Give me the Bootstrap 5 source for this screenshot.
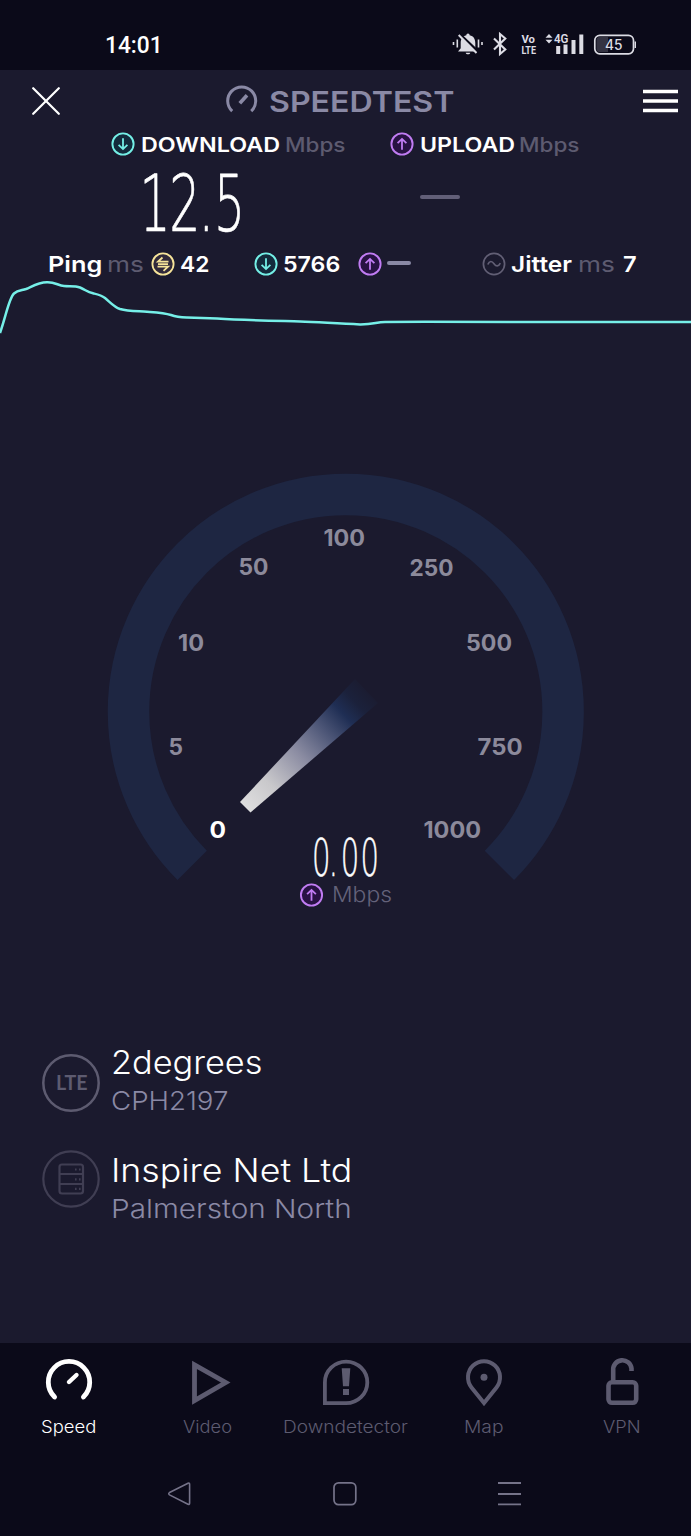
<!DOCTYPE html>
<html lang="en">
<head>
<meta charset="utf-8">
<meta name="viewport" content="width=device-width, initial-scale=1">
<title>Speedtest</title>
<link rel="stylesheet" href="https://cdn.jsdelivr.net/npm/bootstrap@5.3.0/dist/css/bootstrap.min.css">
<style>
  :root { --ink:#1b1a2e; --night:#0b0a19; --muted:#5d5b70; --soft:#8a89a5; }
  body { width:691px; height:1536px; margin:0; background:var(--ink); color:#fff; font-family:Inter,"Open Sans",sans-serif; overflow:hidden; line-height:1; }
  svg { display:block; flex:none; }
  .statusbar { height:70px; background:var(--night); padding:20px 55px 0 105px; }
  .status-icons { margin-top:5px; }
  .clock { font:500 23.5px/50px Roboto,sans-serif; }
  .topbar { height:62px; padding:0 13px 0 32px; }
  .brand { margin-right:26px; }
  .brand-name { font-size:29px; font-weight:600; color:var(--soft); width:184px; }
  .fit { display:inline-block; white-space:nowrap; transform-origin:0 50%; }
  .labels { display:grid; height:24px; align-items:center; padding-left:110.5px; grid-template-columns:30px 144px 105.5px 29.5px 99px 70px; font-size:20.3px; font-weight:600; }
  .labels > div { padding-top:2px; }
  .unit { color:var(--muted); font-weight:500; }
  .readings { display:grid; height:96px; padding-left:131px; grid-template-columns:289px 1fr; }
  .dash-lg { width:40px; height:4px; border-radius:2px; background:#625f78; margin-top:39px; }
  .dash-sm { width:24px; height:4px; border-radius:2px; background:#8a89a5; margin-top:-3px; }
  .stats { display:grid; height:24px; align-items:center; padding-left:47.5px; grid-template-columns:59px 44px 29px 74px 29px 75px 29px 95.500px 28.500px 67px 45px 20px; font-size:22px; font-weight:600; }
  .stats .unit { font-weight:400; }
  .gauge-num { font-family:Inter,sans-serif; font-weight:700; font-size:23px; fill:#8c8a9b; }
  .thin-num { font-family:"DejaVu Sans Light","DejaVu Sans",sans-serif; font-weight:200; fill:#fff; stroke:#fff; stroke-linejoin:round; }
  .hosts { height:400px; margin-top:-7px; padding:101px 0 0 41px; }
  .host { height:96px; column-gap:10px; }
  .host + .host { margin-top:12px; }
  .host-name { font-size:32px; font-weight:300; line-height:38px; height:38px; }
  .host-sub { font-size:26px; font-weight:300; line-height:38px; height:38px; color:var(--soft); }
  .tabs { height:193px; background:var(--night); }
  .tab { color:var(--muted); font-size:16.8px; font-weight:300; padding-top:12px; }
  .tab.active { color:#fff; }
  .tab svg { margin-bottom:7px; }
  .tab-label { line-height:18px; height:18px; }
  .sysnav { padding:42px 169px 0 168px; color:#757389; }
</style>
<script src="https://cdn.jsdelivr.net/npm/bootstrap@5.3.0/dist/js/bootstrap.bundle.min.js"></script>
</head>
<body>
<svg width="0" height="0" class="position-absolute">
  <defs>
    <symbol id="down" viewBox="0 0 24 24"><circle cx="12" cy="12" r="10.600" fill="#132b3c" stroke="currentColor" stroke-width="1.900"/><path d="M12 6.300V17M7.600 12.800L12 17.100L16.400 12.800" fill="none" stroke="currentColor" stroke-width="1.800"/></symbol>
    <symbol id="up" viewBox="0 0 24 24"><circle cx="12" cy="12" r="10.600" fill="#281243" stroke="currentColor" stroke-width="1.900"/><path d="M12 17.700V7M7.600 11.200L12 6.900L16.400 11.200" fill="none" stroke="currentColor" stroke-width="1.800"/></symbol>
  </defs>
</svg>

<header class="statusbar d-flex justify-content-between">
  <div class="clock"><span class="fit" data-w="58">14:01</span></div>
  <svg class="status-icons" width="186" height="40" viewBox="450 25 186 40" fill="#dcdce4">
    <path d="M468 33.500c1 0 1.600.8 1.600 1.700 4.200.9 5.700 4 5.700 8v5l2.500 3.300H458l2.700-3.300v-5c0-4 1.500-7.100 5.700-8 0-.9.600-1.700 1.600-1.700zM465.700 52.700h4.600c-.4 2.200-4.200 2.200-4.600 0z"/>
    <path d="M459.500 34L479 52.500" stroke="#0b0a19" stroke-width="2.600"/><path d="M458.700 35L476.500 53" stroke="#dcdce4" stroke-width="2"/>
    <path d="M453.500 42v3M457.300 39.500v8M478.500 39.500v8M482 42v3" stroke="#dcdce4" stroke-width="1.600"/>
    <path d="M494 38.500L505.300 49.500L500 54V34L505.300 38.500L494 49.500" fill="none" stroke="#dcdce4" stroke-width="2.100"/>
    <g font-family="Roboto,sans-serif" font-weight="700" font-size="11.800">
      <text x="521.500" y="43" textLength="13.500" lengthAdjust="spacingAndGlyphs">Vo</text>
      <text x="521.500" y="53.800" textLength="14.500" lengthAdjust="spacingAndGlyphs">LTE</text>
    </g>
    <text x="554" y="43.200" font-family="Roboto,sans-serif" font-size="13" font-weight="600" textLength="14.500" lengthAdjust="spacingAndGlyphs">4G</text>
    <path d="M545.500 37.800L549 34L552.500 37.800zM545.500 39.800L549 43.500L552.500 39.800z"/>
    <path d="M556.200 46h4v8h-4zM563.500 44.500h4v9.500h-4zM571.500 40h4v14h-4zM579.300 34.500h4v19.500h-4z"/>
    <rect x="594.800" y="35.300" width="38.700" height="18.500" rx="5" fill="none" stroke="#dcdce4" stroke-width="1.700"/>
    <path d="M599.500 37h8.500v15h-8.500q-3 0-3-3v-9q0-3 3-3z" fill="#343342"/>
    <path d="M635.500 41.500v6.500" stroke="#dcdce4" stroke-width="1.800"/>
    <text x="605" y="49.600" font-family="Inter,sans-serif" font-size="13.800" font-weight="500" textLength="17.500" lengthAdjust="spacingAndGlyphs">45</text>
  </svg>
</header>

<nav class="topbar d-flex align-items-center justify-content-between">
  <svg width="28" height="28" viewBox="0 0 28 28" stroke="#fff" stroke-width="2.200" stroke-linecap="round"><path d="M1.200 1.200L26.800 26.800M26.800 1.200L1.200 26.800"/></svg>
  <div class="brand d-flex align-items-center">
    <svg width="44" height="32" viewBox="0 0 44 32" fill="none" stroke="#8a89a5" stroke-width="3"><path d="M7.200 26.200A14 14 0 1 1 26.200 26.200"/><path d="M14.800 18.200L22 10.200" stroke-width="3.600"/></svg>
    <div class="brand-name"><span class="fit" data-w="185">SPEEDTEST</span></div>
  </div>
  <svg width="35" height="24" viewBox="0 0 35 24" stroke="#fff" stroke-width="3.600"><path d="M0 2.500H35M0 12H35M0 21.500H35"/></svg>
</nav>

<section class="labels">
  <svg width="24" height="24" color="#74efe6"><use href="#down"/></svg><div><span class="fit" data-w="139">DOWNLOAD</span></div><div class="unit"><span class="fit" data-w="61">Mbps</span></div>
  <svg width="24" height="24" color="#c07cf2"><use href="#up"/></svg><div><span class="fit" data-w="95">UPLOAD</span></div><div class="unit"><span class="fit" data-w="61">Mbps</span></div>
</section>

<section class="readings">
  <svg width="140" height="96" viewBox="131 156 140 96">
    <text class="thin-num" stroke-width=".7" transform="translate(139.500 230.500) scale(.62 1)" font-size="79" x="0 48 95 120" y="0">12.5</text>
  </svg>
  <div class="dash-lg"></div>
</section>

<section class="stats">
  <div><span class="fit" data-w="54">Ping</span></div><div class="unit"><span class="fit" data-w="37">ms</span></div>
  <svg width="24" height="24" viewBox="0 0 24 24" fill="none" stroke="#f6e49a" stroke-width="1.800"><circle cx="12" cy="12" r="10.600" fill="#30293a"/><path d="M17.500 9.700H7L11.500 5.500M7 12.200H17M6.500 14.700H17L12.500 18.800"/></svg>
  <div><span class="fit" data-w="29">42</span></div>
  <svg width="24" height="24" color="#74efe6"><use href="#down"/></svg><div><span class="fit" data-w="57">5766</span></div>
  <svg width="24" height="24" color="#c07cf2"><use href="#up"/></svg><div class="dash-sm"></div>
  <svg width="24" height="24" viewBox="0 0 24 24" fill="none" stroke="#625f75" stroke-width="1.700"><circle cx="12" cy="12" r="10.600"/><path d="M5.800 12.500C7.500 8.500 10 8.800 12 11.700S16.500 15 18.300 11.200"/></svg>
  <div><span class="fit" data-w="61">Jitter</span></div><div class="unit"><span class="fit" data-w="37">ms</span></div><div><span class="fit" data-w="14">7</span></div>
</section>

<svg width="691" height="64" viewBox="0 276 691 64" fill="none" stroke="#76efe8" stroke-width="2.500">
  <path d="M0 333C6 316 9 298 14 293.500C18 290 22 290.500 26 289C33 286 38 282.500 47 282.300C55 282 58 285.500 64 286C70 286.500 75 285.500 80 287.500C86 290 87 292 93 293.300C98 294.500 101 295 105 298C110 302 114 307 120 309C128 311.300 137 311 147 311.700C155 312.300 164 312.700 171 315C177 317.200 180 317.300 187 317.600L217 318.500C245 320.300 275 320.800 300 321.500C320 322 338 324 360 324.400C374 324.500 376 322 385 321.900C460 321.600 500 322.300 691 322"/>
</svg>

<svg width="691" height="610" viewBox="0 340 691 610">
  <defs><linearGradient id="needle" gradientUnits="userSpaceOnUse" x1="245" y1="807" x2="368" y2="691">
    <stop offset="0" stop-color="#dededf"/><stop offset=".2" stop-color="#c9c8cb"/><stop offset=".45" stop-color="#8b8ca2"/><stop offset=".65" stop-color="#4d5677"/><stop offset=".8" stop-color="#1f2e54"/><stop offset=".9" stop-color="#1b213b"/><stop offset="1" stop-color="#1b1c31"/>
  </linearGradient></defs>
  <path d="M192.200 865.400A217.300 217.300 0 1 1 499.400 865.400" fill="none" stroke="#1e2642" stroke-width="41.500"/>
  <path d="M240 802L250.500 812.500L378 703L355 679z" fill="url(#needle)"/>
  <g class="gauge-num">
    <text x="323.500" y="546" textLength="41.500" lengthAdjust="spacingAndGlyphs">100</text>
    <text x="238.500" y="575" textLength="30" lengthAdjust="spacingAndGlyphs">50</text>
    <text x="409.500" y="576" textLength="44" lengthAdjust="spacingAndGlyphs">250</text>
    <text x="178" y="651" textLength="26" lengthAdjust="spacingAndGlyphs">10</text>
    <text x="466" y="651" textLength="46" lengthAdjust="spacingAndGlyphs">500</text>
    <text x="168.500" y="755" textLength="14.500" lengthAdjust="spacingAndGlyphs">5</text>
    <text x="477.500" y="755" textLength="45" lengthAdjust="spacingAndGlyphs">750</text>
    <text x="209.500" y="838" textLength="16.500" lengthAdjust="spacingAndGlyphs" fill="#fff">0</text>
    <text x="423.500" y="838" textLength="57.500" lengthAdjust="spacingAndGlyphs">1000</text>
  </g>
  <text class="thin-num" stroke-width=".5" transform="translate(312 876.300) scale(.57 1)" font-size="51" x="0 29.500 50.500 85" y="0">0.00</text>
  <use href="#up" x="299.500" y="883" width="24" height="24" color="#c07cf2"/>
  <text x="332" y="902" font-size="21.500" font-weight="300" fill="#64627a" textLength="60" lengthAdjust="spacingAndGlyphs">Mbps</text>
</svg>

<main class="hosts">
  <div class="host d-flex">
    <svg width="60" height="60" viewBox="0 0 60 60" style="margin-top:9px"><circle cx="30" cy="30" r="27.700" fill="none" stroke="#5d5b70" stroke-width="2.500"/><text x="15" y="37.300" font-size="20.500" font-weight="700" fill="#5d5b70" textLength="31.500" lengthAdjust="spacingAndGlyphs" font-family="Lato,sans-serif">LTE</text></svg>
    <div><div class="host-name"><span class="fit" data-w="151">2degrees</span></div><div class="host-sub"><span class="fit" data-w="117">CPH2197</span></div></div>
  </div>
  <div class="host d-flex">
    <svg width="60" height="60" viewBox="0 0 60 60" fill="none" stroke="#403e53" stroke-width="2.200" style="margin-top:-3px"><circle cx="30" cy="30" r="27.700"/><rect x="18.500" y="15.500" width="23.500" height="29" rx="2.500"/><path d="M18.500 25H42M18.500 35H42"/><path d="M34 20.500h1.600M38 20.500h1.600M34 30.300h1.600M38 30.300h1.600M34 39.800h1.600M38 39.800h1.600"/></svg>
    <div><div class="host-name"><span class="fit" data-w="241">Inspire Net Ltd</span></div><div class="host-sub"><span class="fit" data-w="241">Palmerston North</span></div></div>
  </div>
</main>

<footer class="tabs">
  <div class="row g-0 text-center">
    <div class="col tab active d-flex flex-column align-items-center">
      <svg width="56" height="56" viewBox="0 0 56 56" fill="none" stroke="currentColor" stroke-width="4.800" stroke-linecap="round"><path d="M13.600 42A20.700 20.700 0 1 1 42.400 42"/><path d="M28 27L35.500 20" stroke-width="4.400"/></svg>
      <div class="tab-label"><span class="fit" data-w="55">Speed</span></div>
    </div>
    <div class="col tab d-flex flex-column align-items-center">
      <svg width="56" height="56" viewBox="0 0 56 56" fill="none" stroke="currentColor" stroke-width="4.800"><path d="M15.500 9.800L46.700 27.500L15.500 45.500z"/></svg>
      <div class="tab-label"><span class="fit" data-w="49">Video</span></div>
    </div>
    <div class="col tab d-flex flex-column align-items-center">
      <svg width="56" height="56" viewBox="0 0 56 56" fill="none" stroke="currentColor" stroke-width="3.800"><path d="M6.900 48.200V27.400A21.200 20.800 0 1 1 28 48.200z"/><path d="M23.700 13.300H32.300L31 31.300H25zM25 34h6v6h-6z" fill="currentColor" stroke="none"/></svg>
      <div class="tab-label"><span class="fit" data-w="125">Downdetector</span></div>
    </div>
    <div class="col tab d-flex flex-column align-items-center">
      <svg width="56" height="56" viewBox="0 0 56 56" fill="none" stroke="currentColor" stroke-width="4"><path d="M28 48L15.500 32.500A16 16.200 0 1 1 40.500 32.500z"/><circle cx="28" cy="22.300" r="3.500" fill="currentColor" stroke="none"/></svg>
      <div class="tab-label"><span class="fit" data-w="39">Map</span></div>
    </div>
    <div class="col tab d-flex flex-column align-items-center">
      <svg width="56" height="56" viewBox="0 0 56 56" fill="none" stroke="currentColor" stroke-width="4.600"><rect x="14.500" y="27.300" width="27.700" height="20.500" rx="3.500"/><path d="M19.200 27V15.500A9.200 9.200 0 0 1 37.500 13.500V16"/></svg>
      <div class="tab-label"><span class="fit" data-w="38">VPN</span></div>
    </div>
  </div>
  <div class="sysnav d-flex justify-content-between">
    <svg width="24" height="32" viewBox="0 0 24 32" fill="none" stroke="currentColor" stroke-width="1.600" stroke-linejoin="round"><path d="M1.500 14.500Q0 15.700 1.500 16.900L20 26.300Q21.600 26.700 21.600 25.300V6.200Q21.600 4.700 20 5.200z"/></svg>
    <svg width="24" height="32" viewBox="0 0 24 32" fill="none" stroke="currentColor" stroke-width="1.700"><rect x="1" y="4.800" width="21.800" height="21.800" rx="4.500"/></svg>
    <svg width="24" height="32" viewBox="0 0 24 32" stroke="currentColor" stroke-width="1.800"><path d="M0 5H23M0 16H23M0 26.300H23"/></svg>
  </div>
</footer>
<script>
  document.querySelectorAll('.fit').forEach(function (el) {
    var target = +el.dataset.w, natural = el.offsetWidth;
    el.style.transform = 'scaleX(' + target / natural + ')';
    el.style.marginRight = (target - natural) + 'px';
  });
</script>
</body>
</html>
